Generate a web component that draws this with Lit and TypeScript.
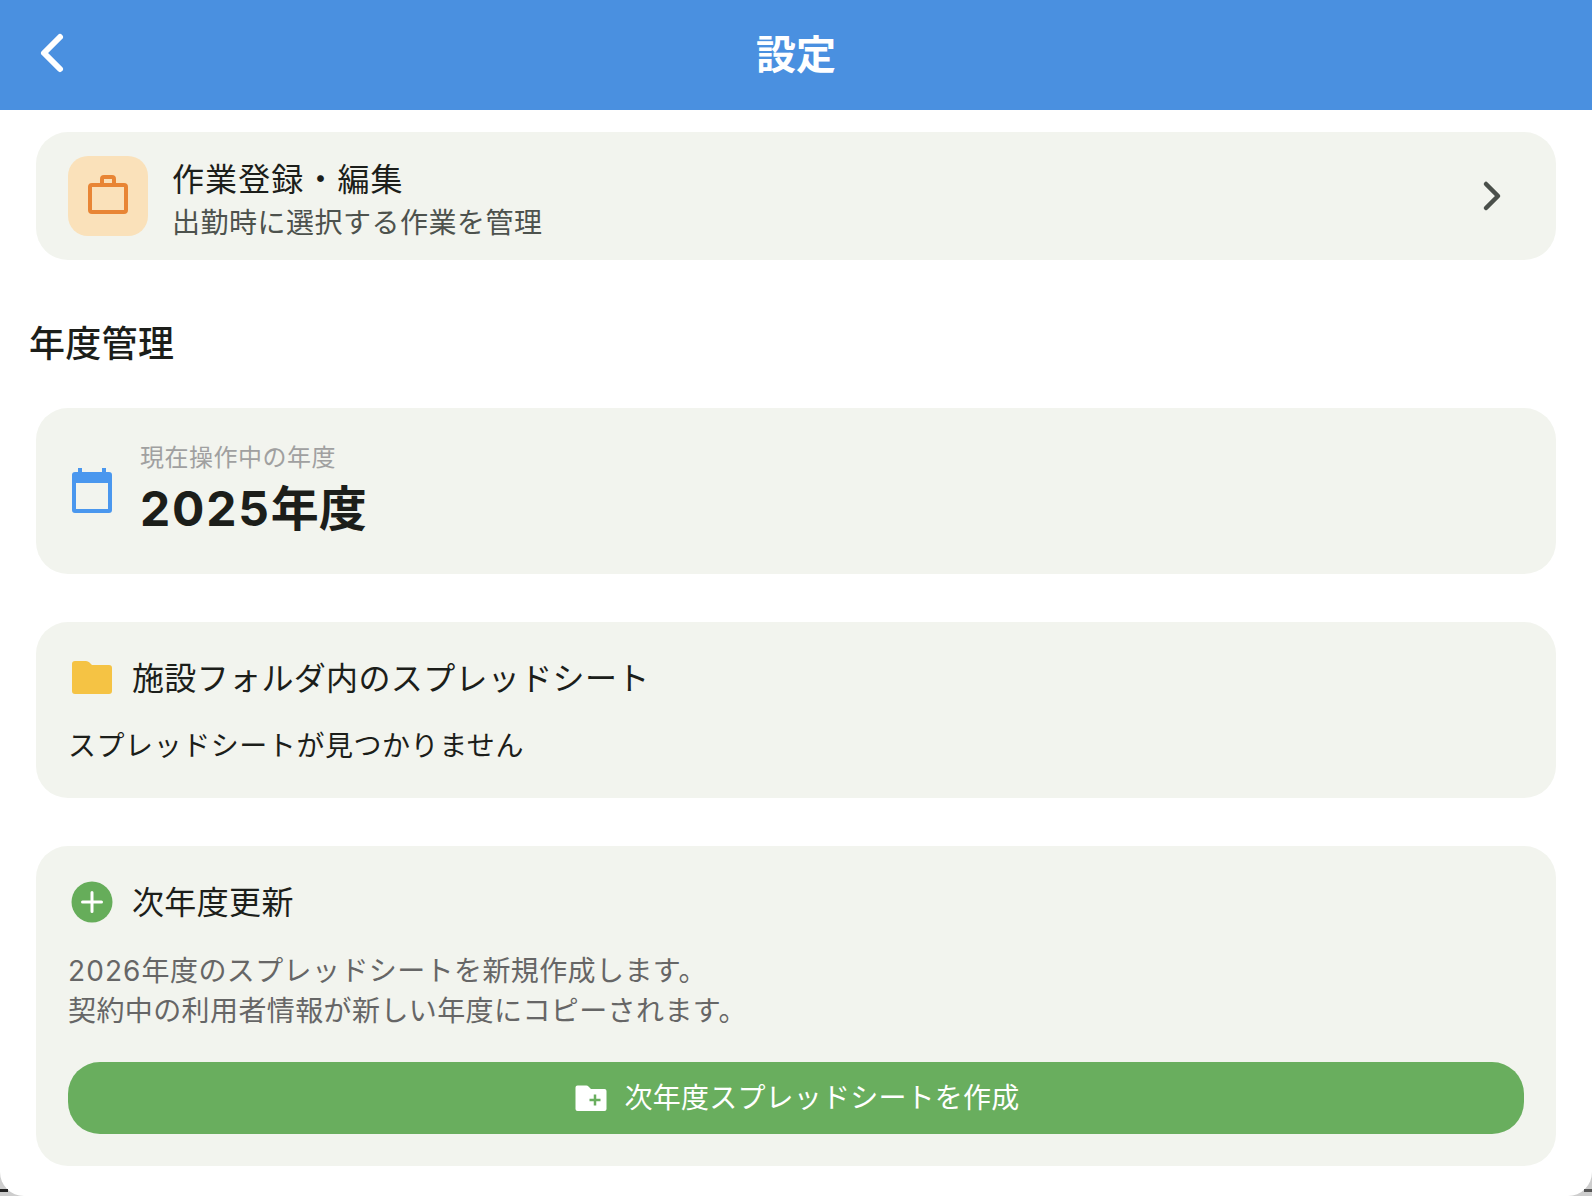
import { LitElement, html, css } from "lit";
import { customElement } from "lit/decorators.js";

@customElement("app-root")
export class AppRoot extends LitElement {
  static styles = css`
    :host {
      display: block;
      position: relative;
      width: 1592px;
      height: 1196px;
      overflow: hidden;
      background: #cdcdcd;
      font-family: Inter, "Noto Sans CJK JP", "Noto Sans", sans-serif;
      color: #1c1e1a;
    }
    .sheet {
      height: 1196px;
      background: #fff;
      border-radius: 0 0 24px 24px;
      overflow: hidden;
    }
    .line {
      position: absolute;
      top: 1189px;
      height: 3px;
      width: 8px;
      background: #222;
    }
    .line.l { left: 0; }
    .line.r { right: 0; background: #555; }
    header {
      height: 110px;
      background: #4a90e0;
      display: grid;
      grid-template-columns: 110px 1fr 110px;
      align-items: center;
      color: #fff;
    }
    header svg { display: block; margin-left: 30px; }
    h1 {
      margin: 0;
      text-align: center;
      font-size: 40px;
      font-weight: 700;
      line-height: 110px;
    }
    main {
      padding: 22px 36px 0;
      display: flex;
      flex-direction: column;
    }
    .card {
      background: #f2f4ee;
      border-radius: 32px;
      padding: 32px;
      box-sizing: border-box;
    }
    .task {
      height: 128px;
      padding: 24px 52px 24px 32px;
      display: flex;
      align-items: center;
    }
    .task-icon {
      width: 80px;
      height: 80px;
      border-radius: 20px;
      background: #fae1ba;
      flex: none;
      margin-right: 24px;
    }
    .task-text { flex: 1; padding-top: 8px; }
    .task-title {
      font-size: 32px;
      line-height: 45px;
      letter-spacing: 1.1px;
    }
    .task-sub {
      font-size: 28px;
      line-height: 42px;
      letter-spacing: 0.5px;
      color: #4d524d;
    }
    h2 {
      margin: 0 0 0 -7px;
      height: 148px;
      box-sizing: border-box;
      padding-top: 57px;
      font-size: 36px;
      line-height: 54px;
      font-weight: 500;
      letter-spacing: 0.3px;
    }
    .year {
      display: flex;
      align-items: center;
      gap: 24px;
      margin-bottom: 48px;
    }
    .year svg, .row svg { display: block; flex: none; }
    .label {
      font-size: 24px;
      line-height: 34px;
      padding-top: 1px;
      letter-spacing: 0.5px;
      color: #a0a0a0;
    }
    .value {
      font-size: 48px;
      line-height: 67px;
      font-weight: 700;
    }
    .value .num { letter-spacing: 1.800px; }
    .row {
      display: flex;
      align-items: center;
      gap: 16px;
      height: 48px;
      font-size: 32px;
      letter-spacing: 0.35px;
    }
    .row span { padding-bottom: 4px; }
    .empty {
      margin: 24px 0 -1px;
      font-size: 28px;
      line-height: 41px;
      letter-spacing: 0.55px;
    }
    .folder { margin-bottom: 48px; }
    .desc {
      margin: 25px 0 31px;
      font-size: 28px;
      line-height: 40px;
      letter-spacing: 0.4px;
      color: #666;
    }
    .desc .num { letter-spacing: 1.100px; }
    button {
      width: 100%;
      height: 72px;
      border: 0;
      border-radius: 32px;
      background: #69ae5e;
      color: #fff;
      font: inherit;
      font-size: 28px;
      letter-spacing: 0.2px;
      display: flex;
      align-items: center;
      justify-content: center;
      gap: 18px;
      padding: 0 0 0 2px;
    }
    button span { padding-bottom: 4px; }
  `;

  render() {
    return html`
      <div class="sheet">
        <header>
          <svg width="40" height="50" viewBox="0 0 40 50" fill="none" stroke="#fff" stroke-width="6" stroke-linecap="round" stroke-linejoin="round">
            <path d="M30 7 L14 23 L30 39" />
          </svg>
          <h1>設定</h1>
          <span></span>
        </header>
        <main>
          <section class="card task">
            <div class="task-icon">
              <svg width="80" height="80" viewBox="0 0 80 80" fill="none" stroke="#e88535" stroke-width="4" stroke-linejoin="round">
                <rect x="22" y="29" width="36" height="27" rx="2" />
                <path d="M34 27 v-4 a2 2 0 0 1 2-2 h8 a2 2 0 0 1 2 2 v4" />
              </svg>
            </div>
            <div class="task-text">
              <div class="task-title">作業登録・編集</div>
              <div class="task-sub">出勤時に選択する作業を管理</div>
            </div>
            <svg width="24" height="36" viewBox="0 0 24 36" fill="none" stroke="#4a4f4a" stroke-width="4.5" stroke-linecap="round" stroke-linejoin="round">
              <path d="M6 6 L18 18 L6 30" />
            </svg>
          </section>

          <h2>年度管理</h2>

          <section class="card year">
            <svg width="48" height="48" viewBox="0 0 48 48">
              <path fill="#4a97ee" fill-rule="evenodd" d="M10 1h4v4h20V1h4v4h3a3 3 0 0 1 3 3v35a3 3 0 0 1-3 3H7a3 3 0 0 1-3-3V8a3 3 0 0 1 3-3h3zM8 16v26h32V16z" />
            </svg>
            <div>
              <div class="label">現在操作中の年度</div>
              <div class="value"><span class="num">2025</span>年度</div>
            </div>
          </section>

          <section class="card folder">
            <div class="row">
              <svg width="48" height="48" viewBox="0 0 48 48">
                <path fill="#f5c344" d="M7 7h11q2 0 3.500 1.500L24 11h17a3 3 0 0 1 3 3v23a3 3 0 0 1-3 3H7a3 3 0 0 1-3-3V10a3 3 0 0 1 3-3z" />
              </svg>
              <span>施設フォルダ内のスプレッドシート</span>
            </div>
            <p class="empty">スプレッドシートが見つかりません</p>
          </section>

          <section class="card">
            <div class="row">
              <svg width="48" height="48" viewBox="0 0 48 48">
                <circle cx="24" cy="24" r="20.500" fill="#66ad5a" />
                <path d="M24 14.500v19M14.500 24h19" stroke="#fff" stroke-width="3" stroke-linecap="round" />
              </svg>
              <span>次年度更新</span>
            </div>
            <p class="desc"><span class="num">2026</span>年度のスプレッドシートを新規作成します。<br />契約中の利用者情報が新しい年度にコピーされます。</p>
            <button>
              <svg width="32" height="27" viewBox="0 0 32 27">
                <path fill="#fff" d="M2.500 0.500h9q1 0 2 1L16 4h13.500a2 2 0 0 1 2 2v18a2 2 0 0 1-2 2h-27a2 2 0 0 1-2-2V2.500a2 2 0 0 1 2-2z" />
                <path d="M20 9.500v11M14.500 15h11" stroke="#69ae5e" stroke-width="2.500" />
              </svg>
              <span>次年度スプレッドシートを作成</span>
            </button>
          </section>
        </main>
      </div>
      <i class="line l"></i>
      <i class="line r"></i>
    `;
  }
}
